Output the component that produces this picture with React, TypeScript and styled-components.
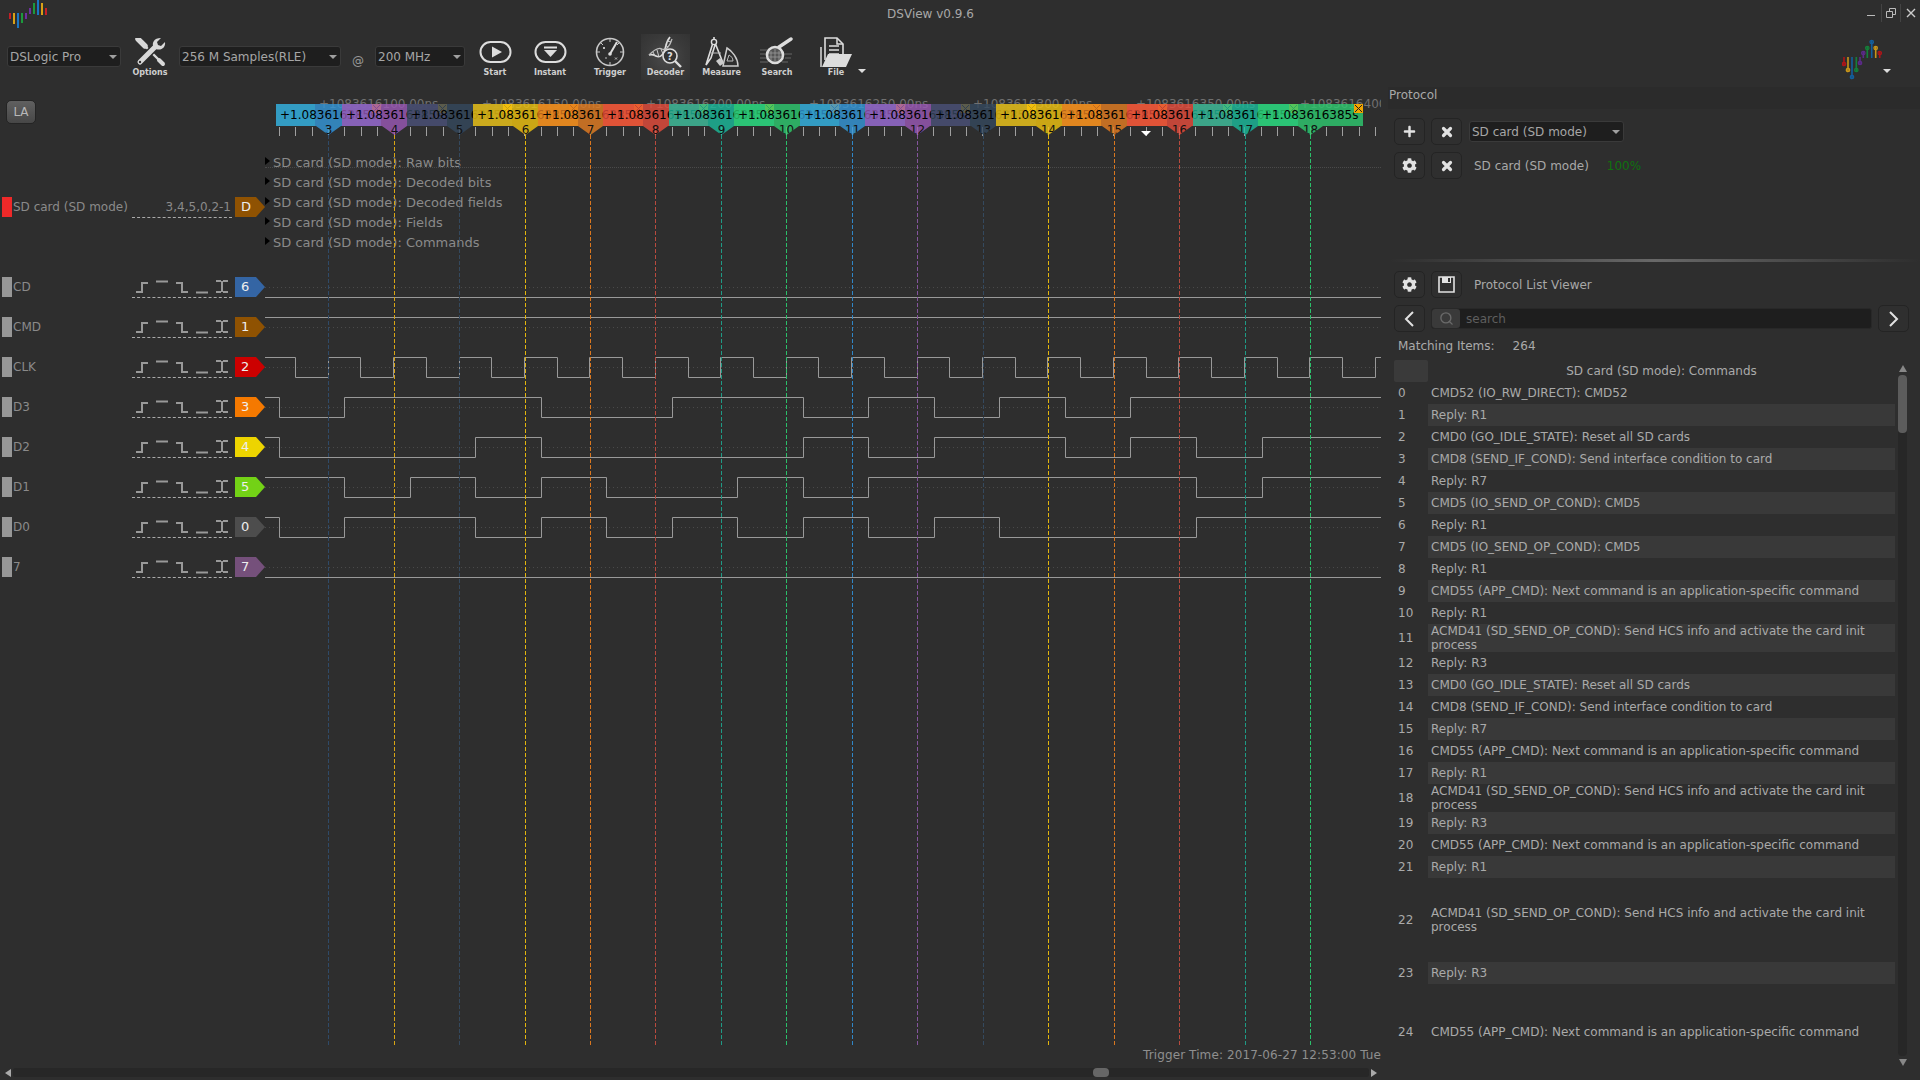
import React from "react";
import styled, { createGlobalStyle } from "styled-components";
import { FaCog, FaPlus } from "react-icons/fa";
import { Search } from "lucide-react";

const GlobalStyle = createGlobalStyle`
  html, body { margin: 0; padding: 0; background: #2e2e2e; }
  * { box-sizing: border-box; }
`;

const Window = styled.div`
  width: 1920px;
  height: 1080px;
  overflow: hidden;
  display: flex;
  flex-direction: column;
  background: #2e2e2e;
  color: #aaa;
  font: 12px/14px "DejaVu Sans", sans-serif;
`;

const TitleBar = styled.div`
  height: 28px;
  flex: none;
  display: flex;
`;
const Title = styled.div`
  flex: 1;
  margin-left: -48px;
  text-align: center;
  line-height: 28px;
  color: #a8a8a8;
`;
const WinControls = styled.div`
  width: 59px;
  display: flex;
  padding-top: 4px;
  align-items: flex-start;
`;
const WinButton = styled.div<{ $sep?: boolean }>`
  width: 20px;
  height: 18px;
  display: flex;
  align-items: center;
  justify-content: center;
  border-left: ${(p) => (p.$sep ? "1px solid #444" : "none")};
`;

const ToolBar = styled.div`
  height: 59px;
  flex: none;
  display: flex;
  align-items: flex-start;
  padding: 6px 0 0 7px;
`;
const Combo = styled.div<{ $w: number }>`
  width: ${(p) => p.$w}px;
  height: 21px;
  flex: none;
  display: flex;
  align-items: center;
  justify-content: space-between;
  padding: 0 3px 0 2px;
  background: #1e1e1e;
  border: 1px solid #3a3a3a;
  border-radius: 3px;
  color: #a6a6a6;
`;
const ToolCombo = styled(Combo)`
  margin-top: 12px;
`;
const DecoderCombo = styled(Combo)`
  margin-left: 1px;
`;
const Caret = styled.span`
  width: 0;
  height: 0;
  border-left: 4px solid transparent;
  border-right: 4px solid transparent;
  border-top: 4px solid #a0a0a0;
`;
const At = styled.div`
  width: 34px;
  margin-top: 20px;
  text-align: center;
  color: #999;
`;
const Tool = styled.div<{ $w: number; $inset?: number; $active?: boolean }>`
  position: relative;
  width: ${(p) => p.$w}px;
  height: 46px;
  flex: none;
  padding-left: ${(p) => p.$inset ?? 0}px;
  display: flex;
  flex-direction: column;
  align-items: center;
  color: #ddd;
  background: ${(p) =>
    p.$active ? "radial-gradient(circle at 50% 50%, #4a4a4a 0, #3a3a3a 60%, #333 100%)" : "none"};
`;
const ToolIcon = styled.div`
  height: 36px;
  flex: none;
  display: flex;
  align-items: center;
  justify-content: center;
`;
const ToolLabel = styled.div`
  margin-top: -6px;
  height: 18px;
  flex: none;
  line-height: 18px;
  font-size: 8px;
  font-weight: 700;
  color: #cfcfcf;
`;
const FileCaret = styled(Caret)`
  position: absolute;
  right: 5px;
  top: 35px;
  border-top-color: #ddd;
`;
const ToolSpacer = styled.div`
  flex: 1;
`;
const Corner = styled.div`
  width: 78px;
  height: 46px;
  position: relative;
  flex: none;
  padding-top: 4px;
`;
const CornerCaret = styled(Caret)`
  position: absolute;
  right: 29px;
  top: 35px;
  border-top-color: #ddd;
`;

const Body = styled.div`
  flex: 1;
  display: flex;
  min-height: 0;
`;
const LeftPane = styled.div`
  width: 1386px;
  flex: none;
  display: flex;
  flex-direction: column;
`;
const Viewer = styled.div`
  position: relative;
  flex: 1;
  display: flex;
  flex-direction: column;
  min-height: 0;
`;
const Band = styled.div`
  height: 65px;
  flex: none;
  display: flex;
`;
const BandHead = styled.div`
  width: 265px;
  flex: none;
  padding: 13px 0 0 6px;
`;
const ModeButton = styled.div`
  width: 30px;
  height: 24px;
  border: 1px solid #242424;
  border-radius: 5px;
  background: linear-gradient(#606060, #474747);
  color: #b8b8b8;
  text-align: center;
  line-height: 22px;
`;
const Ruler = styled.div`
  position: relative;
  flex: 1;
`;
const TimeMark = styled.div<{ $x: number }>`
  position: absolute;
  left: ${(p) => p.$x - 265}px;
  top: 10px;
  color: #707070;
  white-space: nowrap;
`;
const TimeClip = styled.div`
  position: absolute;
  inset: 0 5px 0 0;
  overflow: hidden;
`;
const CursorTag = styled.div<{ $x: number; $color: string }>`
  position: absolute;
  left: ${(p) => p.$x - 265 - 52}px;
  top: 17px;
  width: 105px;
  height: 31px;
  background: ${(p) => p.$color};
  clip-path: polygon(0 0, 100% 0, 100% 22px, 65px 22px, 52.5px 31px, 40px 22px, 0 22px);
  color: #000;
`;
const CursorTime = styled.div`
  padding-left: 4px;
  line-height: 22px;
  white-space: nowrap;
`;
const CursorNum = styled.div`
  position: absolute;
  left: 0;
  right: 0;
  top: 19px;
  text-align: center;
  color: #111;
`;
const CursorClose = styled.div`
  position: absolute;
  top: 0;
  right: 0;
  width: 9px;
  height: 9px;
  background: #f2a500;
  display: flex;
`;
const UnderStrip = styled.div`
  position: absolute;
  left: 11px;
  top: 17px;
  width: 39px;
  height: 22px;
  background: rgba(46, 204, 113, 0.8);
`;
const RulerTicks = styled.svg`
  position: absolute;
  left: 0;
  top: 0;
`;
const CursorLayer = styled.svg`
  position: absolute;
  left: 0;
  top: 0;
  pointer-events: none;
`;

const DecoderRow = styled.div`
  height: 100px;
  flex: none;
  display: flex;
`;
const DecoderHead = styled.div`
  width: 265px;
  flex: none;
  padding-top: 45px;
`;
const DecoderNames = styled.div`
  flex: 1;
`;
const DecoderName = styled.div<{ $guide?: boolean }>`
  position: relative;
  height: 20px;
  line-height: 21px;
  padding-left: 8px;
  font-size: 13px;
  color: #8a8a8a;
  &::before {
    content: "";
    position: absolute;
    left: 0;
    top: 5px;
    border-left: 5px solid #000;
    border-top: 4px solid transparent;
    border-bottom: 4px solid transparent;
  }
  &::after {
    content: "";
    display: ${(p) => (p.$guide ? "block" : "none")};
    position: absolute;
    left: 0;
    width: 1116px;
    top: 15px;
    border-top: 1px dotted #4a4a4a;
  }
`;
const HeadRow = styled.div`
  height: 20px;
  display: flex;
  padding-left: 2px;
`;
const Indicator = styled.div<{ $color: string }>`
  width: 10px;
  height: 20px;
  flex: none;
  background: ${(p) => p.$color};
`;
const SignalName = styled.div`
  width: 120px;
  flex: none;
  padding-left: 1px;
  line-height: 20px;
  color: #8a8a8a;
  white-space: nowrap;
`;
const TriggerSlot = styled.div`
  width: 100px;
  height: 21px;
  flex: none;
  border-bottom: 1px dashed #aaa;
  display: flex;
  gap: 8px;
  padding-left: 4px;
`;
const ChannelList = styled(TriggerSlot)`
  justify-content: flex-end;
  padding: 0 1px 0 0;
  line-height: 20px;
  color: #8a8a8a;
`;
const Tag = styled.div<{ $color: string }>`
  width: 30px;
  height: 20px;
  margin-left: 3px;
  flex: none;
  background: ${(p) => p.$color};
  clip-path: polygon(0 0, 70% 0, 100% 50%, 70% 100%, 0 100%);
  color: #eee;
  padding-left: 6px;
  line-height: 20px;
  font-size: 13px;
`;

const SignalList = styled.div`
  margin-top: 25px;
  display: flex;
  flex-direction: column;
`;
const SignalRow = styled.div`
  height: 40px;
  display: flex;
`;
const SignalHead = styled.div`
  width: 265px;
  flex: none;
`;
const Wave = styled.svg`
  display: block;
  flex: none;
`;
const TriggerTime = styled.div`
  margin-top: auto;
  text-align: right;
  padding: 0 5px 3px 0;
  letter-spacing: 0.1px;
  color: #8f8f8f;
`;
const HScroll = styled.div`
  height: 15px;
  flex: none;
  display: flex;
  align-items: center;
  padding: 0 9px 0 5px;
  gap: 2px;
`;
const HTrack = styled.div`
  flex: 1;
  height: 9px;
  background: #272727;
  border-radius: 3px;
`;
const HThumb = styled.div`
  width: 16px;
  height: 9px;
  margin-left: 1080px;
  border-radius: 4px;
  background: #666;
`;
const ArrowLeft = styled.span`
  border-right: 6px solid #aaa;
  border-top: 4px solid transparent;
  border-bottom: 4px solid transparent;
`;
const ArrowRight = styled.span`
  border-left: 6px solid #aaa;
  border-top: 4px solid transparent;
  border-bottom: 4px solid transparent;
`;

const Dock = styled.div`
  flex: 1;
  min-width: 0;
  display: flex;
  flex-direction: column;
`;
const DockTitle = styled.div`
  height: 22px;
  flex: none;
  margin-left: 2px;
  padding-left: 1px;
  background: #2b2b2b;
  line-height: 17px;
  color: #a8a8a8;
`;
const DecoderPanel = styled.div`
  height: 150px;
  flex: none;
  padding: 9px 0 0 8px;
  display: flex;
  flex-direction: column;
  gap: 7px;
`;
const PanelRow = styled.div`
  height: 27px;
  flex: none;
  display: flex;
  align-items: center;
  gap: 6px;
`;
const IconButton = styled.div`
  width: 31px;
  height: 27px;
  flex: none;
  display: flex;
  align-items: center;
  justify-content: center;
  border: 1px solid #242424;
  border-radius: 5px;
  background: #2f2f2f;
  color: #e2e2e2;
`;
const PanelText = styled.div`
  margin-left: 6px;
  color: #a8a8a8;
`;
const Percent = styled.div`
  margin-left: 12px;
  color: #0f720f;
`;
const Splitter = styled.div`
  height: 3px;
  flex: none;
  margin-left: 4px;
  background: linear-gradient(90deg, #2e2e2e, #686868 50%, #2e2e2e);
`;
const ListPanel = styled.div`
  flex: 1;
  min-height: 0;
  padding: 9px 0 0 8px;
  display: flex;
  flex-direction: column;
  gap: 7px;
`;
const SearchBox = styled.div`
  width: 441px;
  height: 21px;
  flex: none;
  display: flex;
  background: #1e1e1e;
  border: 1px solid #282828;
  border-radius: 3px;
  color: #5f5f5f;
`;
const SearchIconCell = styled.div`
  width: 28px;
  display: flex;
  align-items: center;
  justify-content: center;
  background: #3a3a3a;
  border-radius: 3px;
  color: #6a6a6a;
`;
const SearchHint = styled.div`
  padding-left: 6px;
  line-height: 20px;
`;
const MatchRow = styled.div`
  height: 28px;
  margin-top: -7px;
  padding: 7px 0 0 4px;
  display: flex;
  flex: none;
`;
const MatchCount = styled.div`
  margin-left: 18px;
`;
const TableWrap = styled.div`
  flex: 1;
  min-height: 0;
  margin-top: -7px;
  display: flex;
  margin-bottom: 14px;
`;
const Table = styled.div`
  width: 501px;
  flex: none;
  overflow: hidden;
`;
const TableHead = styled.div`
  height: 22px;
  display: flex;
`;
const HeadCorner = styled.div`
  width: 34px;
  flex: none;
  background: #3a3a3a;
  border-radius: 2px;
`;
const HeadTitle = styled.div`
  flex: 1;
  text-align: center;
  line-height: 22px;
`;
const Row = styled.div<{ $h: number }>`
  height: ${(p) => p.$h}px;
  display: flex;
  align-items: center;
`;
const RowIndex = styled.div`
  width: 34px;
  flex: none;
  padding-left: 4px;
`;
const RowText = styled.div<{ $alt: boolean }>`
  width: 467px;
  height: 100%;
  flex: none;
  display: flex;
  align-items: center;
  padding: 0 3px;
  background: ${(p) => (p.$alt ? "#393939" : "transparent")};
`;
const VScroll = styled.div`
  width: 9px;
  flex: none;
  margin-left: 3px;
  padding-top: 5px;
  display: flex;
  flex-direction: column;
  align-items: center;
  gap: 3px;
`;
const ArrowUp = styled.span`
  border-bottom: 7px solid #888;
  border-left: 4px solid transparent;
  border-right: 4px solid transparent;
`;
const ArrowDown = styled.span`
  border-top: 7px solid #888;
  border-left: 4px solid transparent;
  border-right: 4px solid transparent;
`;
const VTrack = styled.div`
  flex: 1;
  width: 9px;
  border-radius: 4px;
  background: #272727;
`;
const VThumb = styled.div`
  height: 58px;
  border-radius: 4px;
  background: #5c5c5c;
`;

/* cursors: place on the time axis, label colour, dashed line colour */
const CURSORS: [number, number, string, string][] = [
  [3, 328, "#3498db", "#2f4a68"],
  [4, 394, "#9b59b6", "#d9a514"],
  [5, 459, "#34495e", "#34495e"],
  [6, 525, "#f1c40f", "#e3b50e"],
  [7, 590, "#e67e22", "#d9771f"],
  [8, 655, "#e74c3c", "#b84a3e"],
  [9, 721, "#1abc9c", "#1f9a85"],
  [10, 786, "#2ecc71", "#2bbf6a"],
  [11, 852, "#3498db", "#3086c6"],
  [12, 917, "#9b59b6", "#84559d"],
  [13, 983, "#34495e", "#34495e"],
  [14, 1048, "#f1c40f", "#e3b50e"],
  [15, 1114, "#e67e22", "#d9771f"],
  [16, 1179, "#e74c3c", "#b84a3e"],
  [17, 1245, "#1abc9c", "#1f9a85"],
  [18, 1310, "#2ecc71", "#2bbf6a"],
];

const alpha = (hex: string) => {
  const n = parseInt(hex.slice(1), 16);
  return `rgba(${n >> 16},${(n >> 8) & 255},${n & 255},0.8)`;
};

const TIMES = [
  [319, "+1083616100.00ns"],
  [482, "+1083616150.00ns"],
  [646, "+1083616200.00ns"],
  [809, "+1083616250.00ns"],
  [973, "+1083616300.00ns"],
  [1136, "+1083616350.00ns"],
  [1300, "+1083616400.00ns"],
] as [number, string][];

const clockEdges = () => {
  const out: number[] = [];
  for (let x = 295.4; x < 1381; x += 32.72) out.push(x);
  return out;
};

const SIGNALS = [
  { name: "CD", num: "6", color: "#3465a4", high: false, edges: [] as number[] },
  { name: "CMD", num: "1", color: "#8f5202", high: true, edges: [] },
  { name: "CLK", num: "2", color: "#cc0000", high: true, edges: clockEdges() },
  { name: "D3", num: "3", color: "#f57900", high: true, edges: [279, 344, 541, 672, 803, 868, 934, 999, 1065, 1130] },
  { name: "D2", num: "4", color: "#edd400", high: true, edges: [279, 475, 541, 803, 868, 934, 1065, 1130, 1196, 1262] },
  { name: "D1", num: "5", color: "#73d216", high: true, edges: [344, 410, 475, 541, 606, 737, 803, 868, 1196, 1262] },
  { name: "D0", num: "0", color: "#4d4d4d", high: true, edges: [279, 344, 475, 541, 606, 672, 737, 803, 868, 934, 999, 1196] },
  { name: "7", num: "7", color: "#75507b", high: false, edges: [] },
];

const wavePath = (high: boolean, edges: number[]) => {
  let level = high;
  let d = `M0 ${level ? 0.5 : 20.5}`;
  for (const e of edges) {
    const x = Math.floor(e) - 265 + 0.5;
    level = !level;
    d += `H${x}V${level ? 0.5 : 20.5}`;
  }
  return d + "H1116";
};

const EDGE_ICONS = [
  "M0 15H6V6H12",
  "M0 4.5H12",
  "M0 6H6V15H12",
  "M0 15.5H12",
  "M0 4H5M7 4H12M6 4V15M0 15H5M7 15H12",
];

const LONG_ACMD = "ACMD41 (SD_SEND_OP_COND): Send HCS info and activate the card init process";
const APP = "CMD55 (APP_CMD): Next command is an application-specific command";
const ROWS: [string, number][] = [
  ["CMD52 (IO_RW_DIRECT): CMD52", 22],
  ["Reply: R1", 22],
  ["CMD0 (GO_IDLE_STATE): Reset all SD cards", 22],
  ["CMD8 (SEND_IF_COND): Send interface condition to card", 22],
  ["Reply: R7", 22],
  ["CMD5 (IO_SEND_OP_COND): CMD5", 22],
  ["Reply: R1", 22],
  ["CMD5 (IO_SEND_OP_COND): CMD5", 22],
  ["Reply: R1", 22],
  [APP, 22],
  ["Reply: R1", 22],
  [LONG_ACMD, 28],
  ["Reply: R3", 22],
  ["CMD0 (GO_IDLE_STATE): Reset all SD cards", 22],
  ["CMD8 (SEND_IF_COND): Send interface condition to card", 22],
  ["Reply: R7", 22],
  [APP, 22],
  ["Reply: R1", 22],
  [LONG_ACMD, 28],
  ["Reply: R3", 22],
  [APP, 22],
  ["Reply: R1", 22],
  [LONG_ACMD, 84],
  ["Reply: R3", 22],
  [APP, 96],
];

function SmallLogo() {
  const bars = [
    [9, 13, 19, "#c41f26"], [13, 13, 24, "#d9a016"], [17, 13, 28, "#1a76c4"], [21, 13, 23, "#1c9a3c"],
    [25, 13, 19, "#6e2fa0"], [29, 8, 14, "#6e2fa0"], [33, 3, 14, "#1c9a3c"], [37, 0, 15, "#1a76c4"],
    [41, 3, 15, "#d9a016"], [45, 8, 15, "#c41f26"],
  ] as [number, number, number, string][];
  return (
    <svg width="48" height="28">
      {bars.map(([x, a, b, c]) => (
        <rect key={x} x={x} y={a} width="2" height={b - a} fill={c} />
      ))}
    </svg>
  );
}

function BigLogo() {
  const stems = [
    [2, 19, 27, "#b01418", 26], [6, 19, 34, "#c9961a", 32], [10, 19, 40, "#125f9e", 39], [14.3, 19, 34, "#14803a", 32],
    [18, 19, 26, "#5c2a8a", 25], [21.3, 14, 20, "#5c2a8a", 15], [25.3, 9, 20, "#14803a", 10], [29.7, 3, 20, "#125f9e", 4],
    [33.7, 9, 20, "#c9961a", 10], [37.7, 14, 20, "#b01418", 15],
  ] as [number, number, number, string, number][];
  return (
    <svg width="40" height="42">
      {stems.map(([x, a, b, c, ball]) => (
        <g key={x}>
          <line x1={x} x2={x} y1={a} y2={b} stroke={c} strokeWidth="1.6" />
          <circle cx={x} cy={ball} r="1.7" fill="none" stroke={c} strokeWidth="1.3" />
        </g>
      ))}
    </svg>
  );
}

function OptionsIcon() {
  return (
    <svg width="31" height="29">
      <path d="M3 1L10 8" stroke="#d8d8d8" strokeWidth="5.4" strokeLinecap="round" />
      <path d="M11 9L25 23" stroke="#d8d8d8" strokeWidth="2.4" />
      <path d="M24 22L28 26" stroke="#d8d8d8" strokeWidth="4" strokeLinecap="round" />
      <path d="M5 24L20 9" stroke="#2e2e2e" strokeWidth="8" />
      <path d="M5 24L20 9" stroke="#d8d8d8" strokeWidth="5" strokeLinecap="round" />
      <path d="M19 10C16 5 19 0 26 0L22 4L23 7L26 8L30 4C31 10 25 14 19 10Z" fill="#d8d8d8" />
      <circle cx="5" cy="24" r="1.2" fill="#2e2e2e" />
    </svg>
  );
}

function StartIcon() {
  return (
    <svg width="33" height="24">
      <rect x="1.5" y="2" width="30" height="20" rx="10" fill="none" stroke="#ddd" strokeWidth="2" />
      <path d="M13 6.5L23 12L13 17.5Z" fill="#ddd" />
    </svg>
  );
}

function InstantIcon() {
  return (
    <svg width="33" height="24">
      <rect x="1.5" y="2" width="30" height="20" rx="10" fill="none" stroke="#ddd" strokeWidth="2" />
      <rect x="10" y="6.5" width="13" height="2" fill="#ddd" />
      <path d="M10 10H23L16.5 17Z" fill="#ddd" />
    </svg>
  );
}

function TriggerIcon() {
  return (
    <svg width="30" height="30">
      <circle cx="15" cy="15" r="13.5" fill="none" stroke="#c8c8c8" strokeWidth="1.6" />
      <path d="M15 1.5V5M15 25V28.5M1.5 15H5M25 15H28.5M5.5 5.5L8 8M24.5 5.5L22 8" stroke="#c8c8c8" strokeWidth="1" />
      <path d="M15 17L22 5" stroke="#ddd" strokeWidth="2" />
      <path d="M8 10L10 12M10 10L8 12M20 20.5l2 2m0-2l-2 2M10 21h2" stroke="#bbb" strokeWidth="1" />
      <circle cx="15" cy="17" r="1.8" fill="#ddd" />
    </svg>
  );
}

function DecoderIcon() {
  return (
    <svg width="35" height="32">
      <path d="M1 19C8 17 9 24 14 19C19 14 16 8 22 1" fill="none" stroke="#ddd" strokeWidth="1.7" />
      <path d="M1 19C7 13 11 11 14 13C18 15 22 10 24 3" fill="none" stroke="#bbb" strokeWidth="1.3" />
      <path d="M5 16L7 20M9 14L11 21M13 13L15 18M17 9L20 11M19 5L23 6" stroke="#ccc" strokeWidth="1" />
      <circle cx="22" cy="20" r="7" fill="#333" stroke="#ddd" strokeWidth="1.6" />
      <text x="22" y="24" textAnchor="middle" fontSize="10" fontWeight="700" fill="#ddd" fontFamily="DejaVu Sans">?</text>
      <path d="M27 25L33 31" stroke="#ddd" strokeWidth="2.4" />
    </svg>
  );
}

function MeasureIcon() {
  return (
    <svg width="36" height="31">
      <circle cx="10" cy="5" r="2.6" fill="none" stroke="#ddd" strokeWidth="1.4" />
      <path d="M10 0V2M8.6 7L2 28L7 21L11 8M11.5 7L19 26" fill="none" stroke="#ddd" strokeWidth="1.6" />
      <path d="M19 29L34 29C34 21 28 14 23 11Z" fill="none" stroke="#ccc" strokeWidth="1.5" />
      <path d="M23 24L29 24C29 21 27 19 25 18Z" fill="none" stroke="#bbb" strokeWidth="1" />
      <path d="M7 16H17" stroke="#bbb" strokeWidth="1" />
      <path d="M12 24L16 21L20 26L16 29Z" fill="#ccc" />
    </svg>
  );
}

function SearchIcon() {
  return (
    <svg width="34" height="30">
      <path d="M0 13H8M0 17H6M0 21H6M0 25H8M24 17H32M25 21H31M22 25H28" stroke="#666" strokeWidth="1" />
      <path d="M19 10L31 2" stroke="#ddd" strokeWidth="3.4" strokeLinecap="round" />
      <circle cx="15" cy="18" r="8" fill="#555" stroke="#ddd" strokeWidth="2.6" />
      <path d="M11 14V23M15 12V25M19 14V23M9 16H21M8 20H22" stroke="#999" strokeWidth="0.8" />
    </svg>
  );
}

function FileIcon() {
  return (
    <svg width="34" height="32">
      <path d="M6 24V2H18L24 8V19" fill="none" stroke="#ddd" strokeWidth="1.6" />
      <path d="M18 2V8H24M10 10H20M10 14H20M10 18H20" fill="none" stroke="#ddd" strokeWidth="1.5" />
      <path d="M2 11V31" stroke="#ddd" strokeWidth="1.5" />
      <path d="M3 31H27L33 18H9Z" fill="#ddd" />
    </svg>
  );
}

function CloseIcon() {
  return (
    <svg width="12" height="12">
      <path d="M2.5 2.5L9.5 9.5M9.5 2.5L2.5 9.5" stroke="#e2e2e2" strokeWidth="3.2" strokeLinecap="round" />
    </svg>
  );
}

function SaveIcon() {
  return (
    <svg width="17" height="17">
      <path d="M1 1H16V16H1Z" fill="none" stroke="#e2e2e2" strokeWidth="1.6" />
      <path d="M4 1H13V7H4Z" fill="#e2e2e2" />
      <path d="M10 2H12V6H10Z" fill="#2f2f2f" />
    </svg>
  );
}

function Chevron({ flip }: { flip?: boolean }) {
  return (
    <svg width="11" height="16">
      <path d={flip ? "M2 1L9 8L2 15" : "M9 1L2 8L9 15"} fill="none" stroke="#e2e2e2" strokeWidth="2" />
    </svg>
  );
}

function App() {
  return (
    <Window>
      <GlobalStyle />
      <TitleBar>
        <SmallLogo />
        <Title>DSView v0.9.6</Title>
        <WinControls>
          <WinButton>
            <svg width="10" height="10"><path d="M1 7.5H9" stroke="#bbb" strokeWidth="1" /></svg>
          </WinButton>
          <WinButton $sep>
            <svg width="10" height="10"><path d="M.5 3.5H6.5V9.5H.5ZM3.5 3V.5H9.5V6.5H7" fill="none" stroke="#bbb" /></svg>
          </WinButton>
          <WinButton $sep>
            <svg width="10" height="10"><path d="M1 1L9 9M9 1L1 9" stroke="#ccc" strokeWidth="1.4" /></svg>
          </WinButton>
        </WinControls>
      </TitleBar>

      <ToolBar>
        <ToolCombo $w={114}>DSLogic Pro<Caret /></ToolCombo>
        <Tool $w={58}>
          <ToolIcon><OptionsIcon /></ToolIcon>
          <ToolLabel>Options</ToolLabel>
        </Tool>
        <ToolCombo $w={162}>256 M Samples(RLE)<Caret /></ToolCombo>
        <At>@</At>
        <ToolCombo $w={90}>200 MHz<Caret /></ToolCombo>
        <Tool $w={60}><ToolIcon><StartIcon /></ToolIcon><ToolLabel>Start</ToolLabel></Tool>
        <Tool $w={50}><ToolIcon><InstantIcon /></ToolIcon><ToolLabel>Instant</ToolLabel></Tool>
        <Tool $w={66} $inset={4}><ToolIcon><TriggerIcon /></ToolIcon><ToolLabel>Trigger</ToolLabel></Tool>
        <Tool $w={49} $active><ToolIcon><DecoderIcon /></ToolIcon><ToolLabel>Decoder</ToolLabel></Tool>
        <Tool $w={63}><ToolIcon><MeasureIcon /></ToolIcon><ToolLabel>Measure</ToolLabel></Tool>
        <Tool $w={48}><ToolIcon><SearchIcon /></ToolIcon><ToolLabel>Search</ToolLabel></Tool>
        <Tool $w={70}>
          <ToolIcon><FileIcon /></ToolIcon>
          <ToolLabel>File</ToolLabel>
          <FileCaret />
        </Tool>
        <ToolSpacer />
        <Corner>
          <BigLogo />
          <CornerCaret />
        </Corner>
      </ToolBar>

      <Body>
        <LeftPane>
          <Viewer>
            <Band>
              <BandHead><ModeButton>LA</ModeButton></BandHead>
              <Ruler>
                <TimeClip>
                  {TIMES.map(([x, t]) => (
                    <TimeMark key={x} $x={x}>{t}</TimeMark>
                  ))}
                </TimeClip>
                <RulerTicks width="1121" height="65">
                  {Array.from({ length: 68 }, (_, i) => {
                    const x = Math.round(14 + i * 16.36) + 0.5;
                    return <line key={i} x1={x} x2={x} y1="40" y2="49" stroke="#a0a0a0" />;
                  })}
                  <path d="M876 44H886L881 49Z" fill="#fff" />
                </RulerTicks>
                <UnderStrip />
                {CURSORS.map(([n, x, c]) => (
                  <CursorTag key={n} $x={x} $color={alpha(c)}>
                    <CursorClose>
                      <svg width="9" height="9"><path d="M1 1L8 8M8 1L1 8" stroke="#222" /></svg>
                    </CursorClose>
                    <CursorTime>+1.083616385s</CursorTime>
                    <CursorNum>{n}</CursorNum>
                  </CursorTag>
                ))}
              </Ruler>
            </Band>

            <DecoderRow>
              <DecoderHead>
                <HeadRow>
                  <Indicator $color="#ef2929" />
                  <SignalName>SD card (SD mode)</SignalName>
                  <ChannelList>3,4,5,0,2-1</ChannelList>
                  <Tag $color="#8f5202">D</Tag>
                </HeadRow>
              </DecoderHead>
              <DecoderNames>
                <DecoderName $guide>SD card (SD mode): Raw bits</DecoderName>
                <DecoderName>SD card (SD mode): Decoded bits</DecoderName>
                <DecoderName>SD card (SD mode): Decoded fields</DecoderName>
                <DecoderName>SD card (SD mode): Fields</DecoderName>
                <DecoderName>SD card (SD mode): Commands</DecoderName>
              </DecoderNames>
            </DecoderRow>

            <SignalList>
              {SIGNALS.map((s) => (
                <SignalRow key={s.name}>
                  <SignalHead>
                    <HeadRow>
                      <Indicator $color="#979797" />
                      <SignalName>{s.name}</SignalName>
                      <TriggerSlot>
                        {EDGE_ICONS.map((d) => (
                          <svg key={d} width="12" height="20">
                            <path d={d} fill="none" stroke="#999" strokeWidth="2" />
                          </svg>
                        ))}
                      </TriggerSlot>
                      <Tag $color={s.color}>{s.num}</Tag>
                    </HeadRow>
                  </SignalHead>
                  <Wave width="1116" height="22">
                    <line x1="0" x2="1116" y1="10.5" y2="10.5" stroke="#4a4a4a" strokeDasharray="1 3" />
                    <path d={wavePath(s.high, s.edges)} fill="none" stroke="#999" />
                  </Wave>
                </SignalRow>
              ))}
            </SignalList>

            <TriggerTime>Trigger Time: 2017-06-27 12:53:00 Tue</TriggerTime>

            <CursorLayer width="1386" height="978">
              {CURSORS.map(([n, x, , line]) => (
                <line key={n} x1={x + 0.5} x2={x + 0.5} y1="48" y2="958" stroke={line} strokeDasharray="4 2" />
              ))}
            </CursorLayer>
          </Viewer>
          <HScroll>
            <ArrowLeft />
            <HTrack><HThumb /></HTrack>
            <ArrowRight />
          </HScroll>
        </LeftPane>

        <Dock>
          <DockTitle>Protocol</DockTitle>
          <DecoderPanel>
            <PanelRow>
              <IconButton><FaPlus size={13} /></IconButton>
              <IconButton><CloseIcon /></IconButton>
              <DecoderCombo $w={155}>SD card (SD mode)<Caret /></DecoderCombo>
            </PanelRow>
            <PanelRow>
              <IconButton><FaCog size={15} /></IconButton>
              <IconButton><CloseIcon /></IconButton>
              <PanelText>SD card (SD mode)</PanelText>
              <Percent>100%</Percent>
            </PanelRow>
          </DecoderPanel>
          <Splitter />
          <ListPanel>
            <PanelRow>
              <IconButton><FaCog size={15} /></IconButton>
              <IconButton><SaveIcon /></IconButton>
              <PanelText>Protocol List Viewer</PanelText>
            </PanelRow>
            <PanelRow>
              <IconButton><Chevron /></IconButton>
              <SearchBox>
                <SearchIconCell><Search size={15} strokeWidth={2.2} /></SearchIconCell>
                <SearchHint>search</SearchHint>
              </SearchBox>
              <IconButton><Chevron flip /></IconButton>
            </PanelRow>
            <MatchRow>
              Matching Items:
              <MatchCount>264</MatchCount>
            </MatchRow>
            <TableWrap>
              <Table>
                <TableHead>
                  <HeadCorner />
                  <HeadTitle>SD card (SD mode): Commands</HeadTitle>
                </TableHead>
                {ROWS.map(([text, h], i) => (
                  <Row key={i} $h={h}>
                    <RowIndex>{i}</RowIndex>
                    <RowText $alt={i % 2 === 1}>{text}</RowText>
                  </Row>
                ))}
              </Table>
              <VScroll>
                <ArrowUp />
                <VTrack><VThumb /></VTrack>
                <ArrowDown />
              </VScroll>
            </TableWrap>
          </ListPanel>
        </Dock>
      </Body>
    </Window>
  );
}

export default App;
